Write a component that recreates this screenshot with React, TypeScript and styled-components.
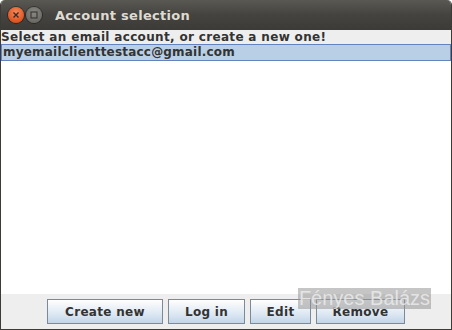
import {createGlobalStyle} from 'styled-components';
import styled from 'styled-components';

const GlobalStyle = createGlobalStyle`
  html, body {
    margin: 0;
    padding: 0;
    background: #ffffff;
  }
  * {
    box-sizing: border-box;
  }
`;

const Window = styled.div`
  position: relative;
  width: 452px;
  height: 330px;
  display: flex;
  flex-direction: column;
  background: #ffffff;
  border: 1px solid #3c3b37;
  border-top: none;
  border-radius: 5px 5px 0 0;
  overflow: hidden;
  font-family: 'DejaVu Sans', 'Liberation Sans', sans-serif;
`;

const TitleBar = styled.div`
  height: 30px;
  flex: none;
  display: flex;
  align-items: center;
  padding-left: 8px;
  margin: 0 -1px;
  background: linear-gradient(#5a5853, #45433f 50%, #3c3b37);
`;

const CircleButton = styled.div<{$close?: boolean}>`
  width: 16px;
  height: 16px;
  border-radius: 50%;
  display: flex;
  align-items: center;
  justify-content: center;
  background: ${p =>
    p.$close
      ? 'radial-gradient(circle at 50% 35%, #f58a5c, #e0531f 70%, #c9461a)'
      : 'radial-gradient(circle at 50% 35%, #8a8883, #6d6b66 70%, #5f5d58)'};
  box-shadow: 0 0 0 1px rgba(0, 0, 0, 0.35);
  margin-right: 2px;
`;

const Title = styled.div`
  margin-left: 11px;
  color: #dfdbd2;
  font-weight: bold;
  font-size: 13px;
  letter-spacing: 0.3px;
`;

const Prompt = styled.div`
  height: 14px;
  flex: none;
  background: #eeeeee;
  color: #333333;
  font-weight: bold;
  font-size: 12px;
  letter-spacing: 0.33px;
  line-height: 14px;
  white-space: nowrap;
`;

const List = styled.div`
  flex: 1;
  background: #ffffff;
`;

const Row = styled.div<{$selected?: boolean}>`
  height: 17px;
  line-height: 15px;
  padding-left: 1px;
  font-size: 12px;
  font-weight: bold;
  letter-spacing: 0.2px;
  color: #333333;
  background: ${p => (p.$selected ? '#b8cfe5' : 'transparent')};
  border: 1px solid ${p => (p.$selected ? '#6382bf' : 'transparent')};
  white-space: nowrap;
`;

const ButtonBar = styled.div`
  height: 35px;
  flex: none;
  background: #eeeeee;
  display: flex;
  justify-content: center;
  align-items: flex-start;
  padding-top: 5px;
  gap: 5px;
`;

const Button = styled.button<{$w: number}>`
  width: ${p => p.$w}px;
  height: 25px;
  padding: 0;
  margin: 0;
  border: 1px solid #7a8a99;
  background: linear-gradient(#ffffff, #eef3f8 30%, #dde8f3 60%, #c3d5e8);
  color: #333333;
  font-family: 'DejaVu Sans', 'Liberation Sans', sans-serif;
  font-weight: bold;
  font-size: 12px;
  letter-spacing: 0.3px;
`;

const Watermark = styled.div`
  position: absolute;
  left: 297px;
  top: 288px;
  width: 133px;
  height: 21px;
  background: rgba(150, 150, 150, 0.55);
  color: rgba(235, 235, 235, 0.85);
  font-family: 'Liberation Sans', Arial, sans-serif;
  font-size: 20px;
  line-height: 21px;
  text-align: center;
  white-space: nowrap;
`;

export default function App() {
  return (
    <>
      <GlobalStyle />
      <Window>
        <TitleBar>
          <CircleButton $close>
            <svg width="8" height="8" viewBox="0 0 8 8">
              <path d="M1.5 1.5 L6.5 6.5 M6.5 1.5 L1.5 6.5" stroke="#3a2a22" strokeWidth="1.4" />
            </svg>
          </CircleButton>
          <CircleButton>
            <svg width="8" height="8" viewBox="0 0 8 8">
              <rect x="1" y="1" width="6" height="6" fill="none" stroke="#3c3b37" strokeWidth="1.2" />
            </svg>
          </CircleButton>
          <Title>Account selection</Title>
        </TitleBar>
        <Prompt>Select an email account, or create a new one!</Prompt>
        <List>
          <Row $selected>myemailclienttestacc@gmail.com</Row>
        </List>
        <ButtonBar>
          <Button $w={116}>Create new</Button>
          <Button $w={77}>Log in</Button>
          <Button $w={61}>Edit</Button>
          <Button $w={89}>Remove</Button>
        </ButtonBar>
        <Watermark>Fényes Balázs</Watermark>
      </Window>
    </>
  );
}
